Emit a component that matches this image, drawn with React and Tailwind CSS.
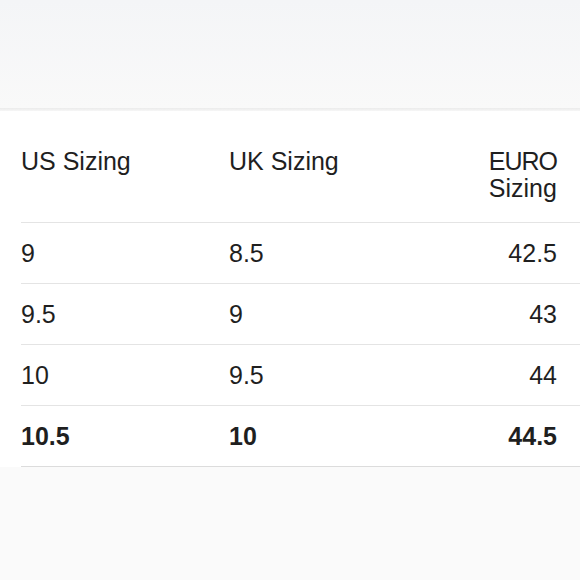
import React from 'react';

const rows = [
    ['9', '8.5', '42.5'],
    ['9.5', '9', '43'],
    ['10', '9.5', '44'],
];

const App = () => {
    return (
        <div className="w-[580px] h-[580px] overflow-hidden flex flex-col bg-[#fafafa] text-[#1f1f1f] font-['Liberation_Sans',Arial,sans-serif] text-[25px] leading-[27px]">
            <div className="h-[108px] bg-gradient-to-b from-[#f4f5f7] to-[#f9f9f9]" />
            <div className="h-[3px] bg-gradient-to-b from-[#ebebeb] to-[#f6f6f6]" />
            <div className="bg-white pl-[21px]">
                <div className="grid grid-cols-[208px_1fr_auto] pt-[37px] pb-[20px] border-b border-[#e4e4e4] pr-[23px]">
                    <div>US Sizing</div>
                    <div>UK Sizing</div>
                    <div className="text-left">
                        <span className="tracking-[-1px]">EURO</span>
                        <br />
                        Sizing
                    </div>
                </div>
                {rows.map((r) => (
                    <div key={r[0]} className="grid grid-cols-[208px_1fr_auto] items-center h-[61px] border-b border-[#e4e4e4] pr-[23px]">
                        <div>{r[0]}</div>
                        <div>{r[1]}</div>
                        <div className="text-right">{r[2]}</div>
                    </div>
                ))}
                <div className="grid grid-cols-[208px_1fr_auto] items-center h-[61px] border-b border-[#dcdcdc] pr-[23px] font-bold">
                    <div>10.5</div>
                    <div>10</div>
                    <div className="text-right">44.5</div>
                </div>
            </div>
            <div className="flex-1 bg-[#fafafa]" />
        </div>
    );
};

export default App;
